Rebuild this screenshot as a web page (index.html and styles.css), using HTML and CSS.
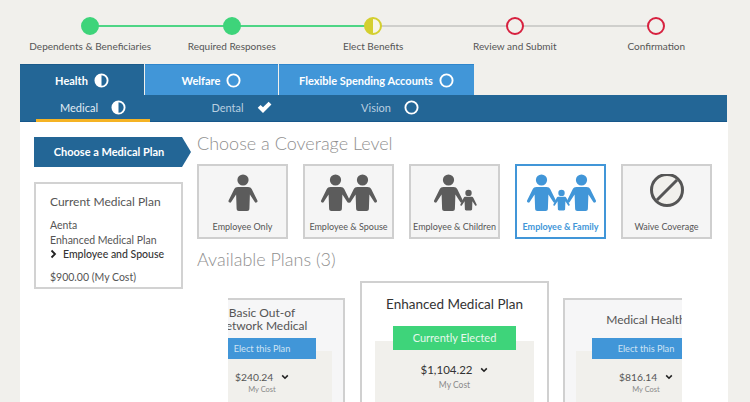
FILE: index.html
```html
<!DOCTYPE html>
<html>
<head>
  <meta charset="UTF-8">
  <title>Choose a Medical Plan</title>
  <link rel="stylesheet" href="styles.css">
</head>
<body>

<svg class="defs" width="0" height="0">
  <defs>
    <symbol id="adult" viewBox="0 0 30 38" overflow="visible">
      <circle cx="15" cy="6" r="5.6"/>
      <path d="M10 13H20C22 13 23 13.800 23.700 15L29.400 26.600C29.700 27.300 29.500 27.900 29 28.200L28.300 28.600C27.700 28.900 27.200 28.700 26.800 28.100L21.900 20.600L21.400 34.600C21.300 36.400 20.500 37 19.100 37H10.900C9.500 37 8.700 36.400 8.600 34.600L8.100 20.600L3.200 28.100C2.800 28.700 2.300 28.900 1.700 28.600L1 28.200C.5 27.900 .3 27.300 .6 26.600L6.300 15C7 13.800 8 13 10 13Z"/>
    </symbol>
    <symbol id="half" viewBox="0 0 16 16">
      <circle cx="8" cy="8" r="6.500" fill="none" stroke="currentColor" stroke-width="2"/>
      <path d="M8 1.500A6.500 6.500 0 0 0 8 14.500Z" fill="currentColor"/>
    </symbol>
    <symbol id="ring" viewBox="0 0 16 16">
      <circle cx="8" cy="8" r="6.500" fill="none" stroke="currentColor" stroke-width="2"/>
    </symbol>
    <symbol id="caret" viewBox="0 0 10 7">
      <path d="M1.500 1.500L5 5L8.500 1.500" fill="none" stroke="currentColor" stroke-width="2"/>
    </symbol>
  </defs>
</svg>

<ol class="steps">
  <li class="step done"><span class="dot"></span>Dependents &amp; Beneficiaries</li>
  <li class="step done"><span class="dot"></span>Required Responses</li>
  <li class="step partial"><span class="dot"></span>Elect Benefits</li>
  <li class="step todo"><span class="dot"></span>Review and Submit</li>
  <li class="step todo"><span class="dot"></span>Confirmation</li>
</ol>

<div class="tabs">
  <div class="tab tab-health active">Health <svg class="state"><use href="#half"/></svg></div>
  <div class="tab tab-welfare">Welfare <svg class="state"><use href="#ring"/></svg></div>
  <div class="tab tab-fsa">Flexible Spending Accounts <svg class="state"><use href="#ring"/></svg></div>
</div>

<div class="subtabs">
  <div class="subtab active">Medical <svg class="state"><use href="#half"/></svg></div>
  <div class="subtab">Dental
    <svg class="state" viewBox="0 0 16 16"><path d="M.8 8.200L3.800 5.200L6.400 7.800L12.400 1.800L15.400 4.800L6.400 13.800Z" fill="currentColor"/></svg>
  </div>
  <div class="subtab">Vision <svg class="state"><use href="#ring"/></svg></div>
</div>

<div class="panel">
  <div class="side">
    <div class="side-head">Choose a Medical Plan</div>
    <div class="current">
      <h3>Current Medical Plan</h3>
      <p>Aenta</p>
      <p>Enhanced Medical Plan</p>
      <p class="level"><svg class="chev" viewBox="0 0 7 10"><path d="M1.500 1.500L5 5L1.500 8.500" fill="none" stroke="currentColor" stroke-width="1.800"/></svg>Employee and Spouse</p>
      <p class="cost">$900.00 (My Cost)</p>
    </div>
  </div>

  <div class="main">
    <h2>Choose a Coverage Level</h2>
    <div class="levels">
      <div class="level-card">
        <svg class="people" viewBox="0 0 86 38"><use href="#adult" x="28" width="30" height="38"/></svg>
        Employee Only
      </div>
      <div class="level-card">
        <svg class="people" viewBox="0 0 86 38"><use href="#adult" x="14.500" width="30" height="38"/><use href="#adult" x="41.500" width="30" height="38"/></svg>
        Employee &amp; Spouse
      </div>
      <div class="level-card">
        <svg class="people" viewBox="0 0 86 38"><use href="#adult" x="21.500" width="30" height="38"/><use href="#adult" x="48" y="15.500" width="17" height="21.500"/></svg>
        Employee &amp; Children
      </div>
      <div class="level-card selected">
        <svg class="people" viewBox="0 0 86 38"><use href="#adult" x="8.500" width="30" height="38"/><use href="#adult" x="35" y="15.500" width="17" height="21.500"/><use href="#adult" x="48.500" width="30" height="38"/></svg>
        Employee &amp; Family
      </div>
      <div class="level-card">
        <svg class="people" viewBox="0 0 86 38"><circle cx="43" cy="16" r="15.500" fill="#f1f0ec" stroke="#555" stroke-width="3"/><path d="M33 26L53 6" stroke="#555" stroke-width="3"/></svg>
        Waive Coverage
      </div>
    </div>

    <h2 class="plans-title">Available Plans (3)</h2>
    <div class="carousel">
      <div class="plans">
        <div class="plan">
          <h4>Basic Out-of<br>Network Medical</h4>
          <div class="plan-body">
            <div class="elect">Elect this Plan</div>
            <div class="price">$240.24 <svg class="caret"><use href="#caret"/></svg></div>
            <div class="cost-label">My Cost</div>
          </div>
        </div>
        <div class="plan elected">
          <h4>Enhanced Medical Plan</h4>
          <div class="plan-body">
            <div class="elect">Currently Elected</div>
            <div class="price">$1,104.22 <svg class="caret"><use href="#caret"/></svg></div>
            <div class="cost-label">My Cost</div>
          </div>
        </div>
        <div class="plan">
          <h4>Medical Health</h4>
          <div class="plan-body">
            <div class="elect">Elect this Plan</div>
            <div class="price">$816.14 <svg class="caret"><use href="#caret"/></svg></div>
            <div class="cost-label">My Cost</div>
          </div>
        </div>
      </div>
    </div>
  </div>
</div>

</body>
</html>
```

FILE: styles.css
```css
html, body {
  height: 402px;
  overflow: hidden;
}
body {
  margin: 0;
  background: #f1f0ec;
  font-family: Lato, "Liberation Sans", sans-serif;
  color: #555;
}
.defs {
  display: block;
}

/* stepper */
.steps {
  display: grid;
  grid-template-columns: repeat(5, 141.5px);
  height: 64px;
  margin: 0;
  padding: 17px 0 0 19.5px;
  box-sizing: border-box;
  list-style: none;
}
.step {
  position: relative;
  display: flex;
  flex-direction: column;
  align-items: center;
  gap: 4px;
  font-size: 10px;
  line-height: 14px;
  white-space: nowrap;
}
.step::after {
  content: "";
  position: absolute;
  left: 50%;
  top: 8px;
  width: 141.5px;
  height: 2px;
  background: #cfcfcc;
}
.step:last-child::after {
  display: none;
}
.step.done::after {
  background: #4ed585;
}
.dot {
  position: relative;
  z-index: 1;
  width: 18px;
  height: 18px;
  box-sizing: border-box;
  border-radius: 50%;
  border: 2px solid #d7213f;
  background: #f1f0ec;
}
.done .dot {
  border-color: #3ed47a;
  background: #3ed47a;
}
.partial .dot {
  border-color: #d4cf2f;
  background: linear-gradient(90deg, #d4cf2f 50%, #f7f6e6 50%);
}

/* tabs */
.tabs {
  display: flex;
  gap: 1px;
  margin-left: 20px;
  height: 31px;
}
.tab {
  display: flex;
  align-items: center;
  justify-content: center;
  gap: 6px;
  background: #4196d8;
  border-top: 1px solid #2f86cc;
  box-sizing: border-box;
  color: #fff;
  font-size: 11px;
  font-weight: 700;
}
.tab.active {
  background: #236696;
  border-top-color: #1a5a8a;
}
.tab-health {
  width: 124px;
}
.tab-welfare {
  width: 133px;
}
.tab-fsa {
  width: 195px;
}
.state {
  width: 15px;
  height: 15px;
  color: #fff;
  flex: none;
}
.subtabs {
  display: flex;
  gap: 34.500px;
  width: 707px;
  height: 27px;
  margin-left: 20px;
  padding-left: 16px;
  box-sizing: border-box;
  background: #236696;
  border-bottom: 1px solid #17578a;
}
.subtab {
  display: flex;
  align-items: center;
  justify-content: center;
  gap: 13px;
  width: 114px;
  height: 27px;
  box-sizing: border-box;
  padding-bottom: 3px;
  color: #b9cfe0;
  font-size: 11px;
}
.subtab.active {
  color: #e1ecf4;
  border-bottom: 3px solid #f5b324;
  padding-bottom: 0;
}

/* panel */
.panel {
  display: flex;
  gap: 6px;
  width: 708px;
  height: 280px;
  margin-left: 20px;
  padding-left: 14px;
  box-sizing: border-box;
  background: #fff;
}
.side {
  width: 157px;
  padding-top: 15px;
  flex: none;
}
.side-head {
  height: 30px;
  padding-right: 7px;
  box-sizing: border-box;
  background: #236696;
  color: #fff;
  font-size: 11px;
  font-weight: 700;
  line-height: 30px;
  text-align: center;
  clip-path: polygon(0 0, 148px 0, 100% 50%, 148px 100%, 0 100%);
}
.current {
  width: 149px;
  height: 107px;
  margin-top: 15px;
  padding: 9px 14px;
  box-sizing: border-box;
  border: 2px solid #d2d2d2;
}
.current h3 {
  margin: 0 0 8px;
  font-size: 12px;
  font-weight: 400;
  line-height: 17px;
  white-space: nowrap;
}
.current p {
  margin: 0;
  font-size: 10.500px;
  line-height: 14.500px;
  white-space: nowrap;
}
.current .level {
  display: flex;
  align-items: center;
  color: #333;
  font-weight: 500;
}
.chev {
  width: 7px;
  height: 10px;
  margin-right: 6px;
  color: #222;
}
.current .cost {
  margin-top: 8px;
}

.main {
  width: 517px;
}
.main h2 {
  margin: 9px 0;
  color: #8f8f8f;
  font-size: 18px;
  font-weight: 300;
  line-height: 24px;
  white-space: nowrap;
}
.levels {
  display: flex;
  gap: 15px;
}
.level-card {
  display: flex;
  flex-direction: column;
  align-items: center;
  width: 91px;
  height: 75px;
  padding-top: 8px;
  box-sizing: border-box;
  background: #f5f5f5;
  border: 2px solid #cfcfcf;
  fill: #5c5c5c;
  font-size: 9px;
  line-height: 12px;
  white-space: nowrap;
}
.level-card.selected {
  background: #fff;
  border-color: #4196d8;
  color: #4196d8;
  fill: #4196d8;
  font-weight: 700;
}
.people {
  width: 86px;
  height: 38px;
  margin-bottom: 9px;
  flex: none;
}
.main .plans-title {
  margin: 8px 0 10px;
}

/* plans */
.carousel {
  width: 454px;
  height: 121px;
  margin-left: 31px;
  overflow: hidden;
}
.plans {
  display: flex;
  align-items: flex-start;
  margin-left: -49px;
}
.plan {
  width: 166px;
  height: 180px;
  margin-top: 17px;
  margin-right: 15px;
  padding: 0 11px;
  box-sizing: border-box;
  background: #f6f6f7;
  border: 2px solid #d0d0d0;
  flex: none;
}
.plan h4 {
  display: flex;
  align-items: center;
  justify-content: center;
  height: 38px;
  margin: 0 -11px;
  color: #555;
  font-size: 12px;
  font-weight: 400;
  line-height: 13px;
  text-align: center;
  white-space: nowrap;
}
.plan-body {
  height: 120px;
  margin-top: 13px;
  background: #f1f0ec;
  text-align: center;
}
.elect {
  height: 21px;
  margin: 0 16px;
  position: relative;
  top: -13px;
  margin-bottom: -13px;
  background: #4196d8;
  color: #cfe3f4;
  font-size: 9.200px;
  line-height: 21px;
}
.price {
  margin-top: 11px;
  font-size: 10.300px;
  line-height: 14px;
}
.caret {
  width: 8px;
  height: 6px;
  margin-left: 5px;
  color: #222;
  vertical-align: 1px;
}
.cost-label {
  margin-top: 1px;
  color: #8a8a8a;
  font-size: 7.500px;
  line-height: 10px;
}
.plan.elected {
  width: 189px;
  margin-top: 0;
  margin-right: 14px;
  padding: 0 13px;
  background: #fff;
}
.elected h4 {
  height: 42px;
  margin: 0 -13px;
  color: #333;
  font-size: 13.500px;
  line-height: 20px;
}
.elected .elect {
  height: 24px;
  margin: 0 18px -15px;
  top: -15px;
  background: #3ed47a;
  color: #e6f8ec;
  font-size: 11px;
  line-height: 24px;
}
.elected .plan-body {
  height: 130px;
  margin-top: 16px;
}
.elected .price {
  margin-top: 12px;
  color: #333;
  font-size: 11.500px;
  line-height: 16px;
}
.elected .cost-label {
  margin-top: 2px;
  font-size: 8.500px;
  line-height: 11px;
}
```
